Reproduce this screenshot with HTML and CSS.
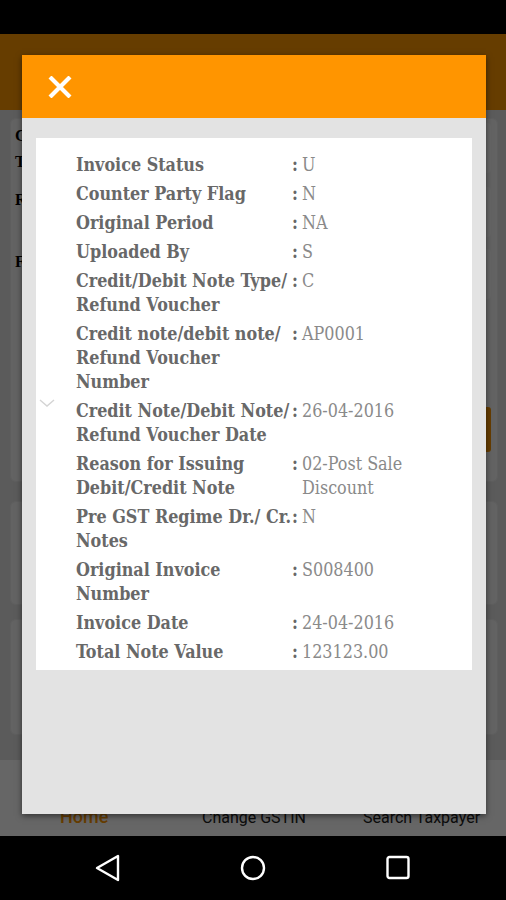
FILE: index.html
```html
<!DOCTYPE html>
<html>
    <head>
        <meta charset="utf-8">
        <title>Credit / Debit Note Details</title>
        <link rel="stylesheet" href="styles.css">
    </head>
    <body>
        <div class="phone">
            <div class="status_bar"></div>
            <div class="app_bar"></div>
            <div class="content">
                <div class="card card_form">
                    <div class="form_row">
                        <div class="form_label">Counter Party<br>Trade Name</div>
                        <div class="form_input"></div>
                    </div>
                    <div class="form_row">
                        <div class="form_label">Return Period</div>
                        <div class="form_input"></div>
                    </div>
                    <div class="form_row">
                        <div class="form_label">Financial Year</div>
                        <div class="form_input"></div>
                    </div>
                    <div class="form_button"></div>
                </div>
                <div class="card card_small"></div>
                <div class="card card_large"></div>
            </div>
            <div class="tabs">
                <span class="tab tab_active">Home</span>
                <span class="tab">Change GSTIN</span>
                <span class="tab">Search Taxpayer</span>
            </div>
            <div class="sys_nav">
                <svg width="30" height="30" viewBox="0 0 30 30"><path d="M25 3 L25 27 L4 15 Z" fill="none" stroke="#fff" stroke-width="2.4" stroke-linejoin="round"/></svg>
                <svg width="30" height="30" viewBox="0 0 30 30"><circle cx="15" cy="15" r="11" fill="none" stroke="#fff" stroke-width="2.4"/></svg>
                <svg width="30" height="30" viewBox="0 0 30 30"><rect x="4.5" y="4" width="21" height="21" rx="2" fill="none" stroke="#fff" stroke-width="2.4"/></svg>
            </div>
            <div class="overlay"></div>
            <div class="modal">
                <div class="modal_head">
                    <svg class="close" width="24" height="22" viewBox="0 0 24 22"><path d="M2 1 L22 21 M22 1 L2 21" stroke="#fff" stroke-width="4.2"/></svg>
                </div>
                <div class="modal_body">
                    <div class="details">
                        <svg class="chevron" width="18" height="12" viewBox="0 0 18 12"><path d="M2 3 L9 9 L16 3" fill="none" stroke="#d4d4d4" stroke-width="1.4"/></svg>
                        <div class="label">Invoice Status</div><div class="colon">:</div><div class="value">U</div>
                        <div class="label">Counter Party Flag</div><div class="colon">:</div><div class="value">N</div>
                        <div class="label">Original Period</div><div class="colon">:</div><div class="value">NA</div>
                        <div class="label">Uploaded By</div><div class="colon">:</div><div class="value">S</div>
                        <div class="label">Credit/Debit Note Type/ Refund Voucher</div><div class="colon">:</div><div class="value">C</div>
                        <div class="label">Credit note/debit note/ Refund Voucher Number</div><div class="colon">:</div><div class="value">AP0001</div>
                        <div class="label">Credit Note/Debit Note/ Refund Voucher Date</div><div class="colon">:</div><div class="value">26-04-2016</div>
                        <div class="label">Reason for Issuing Debit/Credit Note</div><div class="colon">:</div><div class="value">02-Post Sale Discount</div>
                        <div class="label">Pre GST Regime Dr./ Cr. Notes</div><div class="colon">:</div><div class="value">N</div>
                        <div class="label">Original Invoice Number</div><div class="colon">:</div><div class="value">S008400</div>
                        <div class="label">Invoice Date</div><div class="colon">:</div><div class="value">24-04-2016</div>
                        <div class="label">Total Note Value</div><div class="colon">:</div><div class="value">123123.00</div>
                    </div>
                </div>
            </div>
        </div>
    </body>
</html>
```

FILE: styles.css
```css
* {
    margin: 0;
    padding: 0;
    box-sizing: border-box;
}
body {
    width: 506px;
    height: 900px;
    overflow: hidden;
    background: #000;
}
.phone {
    position: relative;
    display: flex;
    flex-direction: column;
    width: 506px;
    height: 900px;
    background: #e4e4e4;
}
.status_bar {
    height: 34px;
    background: #000;
}
.app_bar {
    height: 76px;
    background: #ff9800;
}
.content {
    flex: 1;
    display: flex;
    flex-direction: column;
    padding: 8px 8px 0 10px;
}
.card {
    background: #f7f7f7;
    border-radius: 6px;
    border: 1px solid #ececec;
}
.card_form {
    height: 364px;
    margin-bottom: 19px;
    padding: 4px 6px 0 4px;
}
.card_small {
    height: 104px;
    margin-bottom: 14px;
}
.card_large {
    height: 116px;
}
.form_row {
    display: flex;
    justify-content: space-between;
    margin-bottom: 12px;
}
.form_label {
    font-family: "Liberation Serif", serif;
    font-weight: bold;
    font-size: 16px;
    line-height: 26px;
    color: #000;
}
.form_input {
    width: 300px;
    height: 50px;
    background: #ffffff;
    border-radius: 4px;
}
.form_button {
    width: 190px;
    height: 45px;
    margin: 108px 0 0 auto;
    background: #ff9800;
    border-radius: 3px;
}
.tabs {
    display: grid;
    grid-template-columns: 202px 161px 1fr;
    align-items: end;
    height: 76px;
    padding-bottom: 9px;
    background: #ffffff;
    font-family: Roboto, sans-serif;
    font-size: 16px;
    color: #222;
}
.tab_active {
    padding-left: 60px;
    font-size: 18px;
    font-weight: 500;
    color: #ff9800;
}
.sys_nav {
    display: flex;
    justify-content: center;
    align-items: center;
    gap: 115px;
    height: 64px;
    background: #000;
}
.overlay {
    position: absolute;
    left: 0;
    top: 34px;
    width: 506px;
    height: 802px;
    background: rgba(0, 0, 0, 0.6);
}
.modal {
    position: absolute;
    left: 22px;
    top: 55px;
    width: 464px;
    height: 759px;
    display: flex;
    flex-direction: column;
    background: #e3e3e3;
    box-shadow: 0 2px 6px rgba(0, 0, 0, 0.5);
}
.modal_head {
    height: 63px;
    padding: 21px 0 0 26px;
    background: #ff9500;
}
.close {
    display: block;
}
.modal_body {
    flex: 1;
    padding: 20px 14px;
}
.details {
    position: relative;
    display: grid;
    grid-template-columns: 216px 10px 120px;
    row-gap: 5px;
    padding: 15px 0 6px 40px;
    background: #fff;
    font-family: "DejaVu Serif Condensed", "DejaVu Serif", serif;
    font-stretch: condensed;
    font-size: 17.8px;
    line-height: 24px;
}
.chevron {
    position: absolute;
    left: 2px;
    top: 259px;
}
.label, .colon {
    font-weight: bold;
    color: #686868;
}
.value {
    color: #8a8a8a;
}
```
